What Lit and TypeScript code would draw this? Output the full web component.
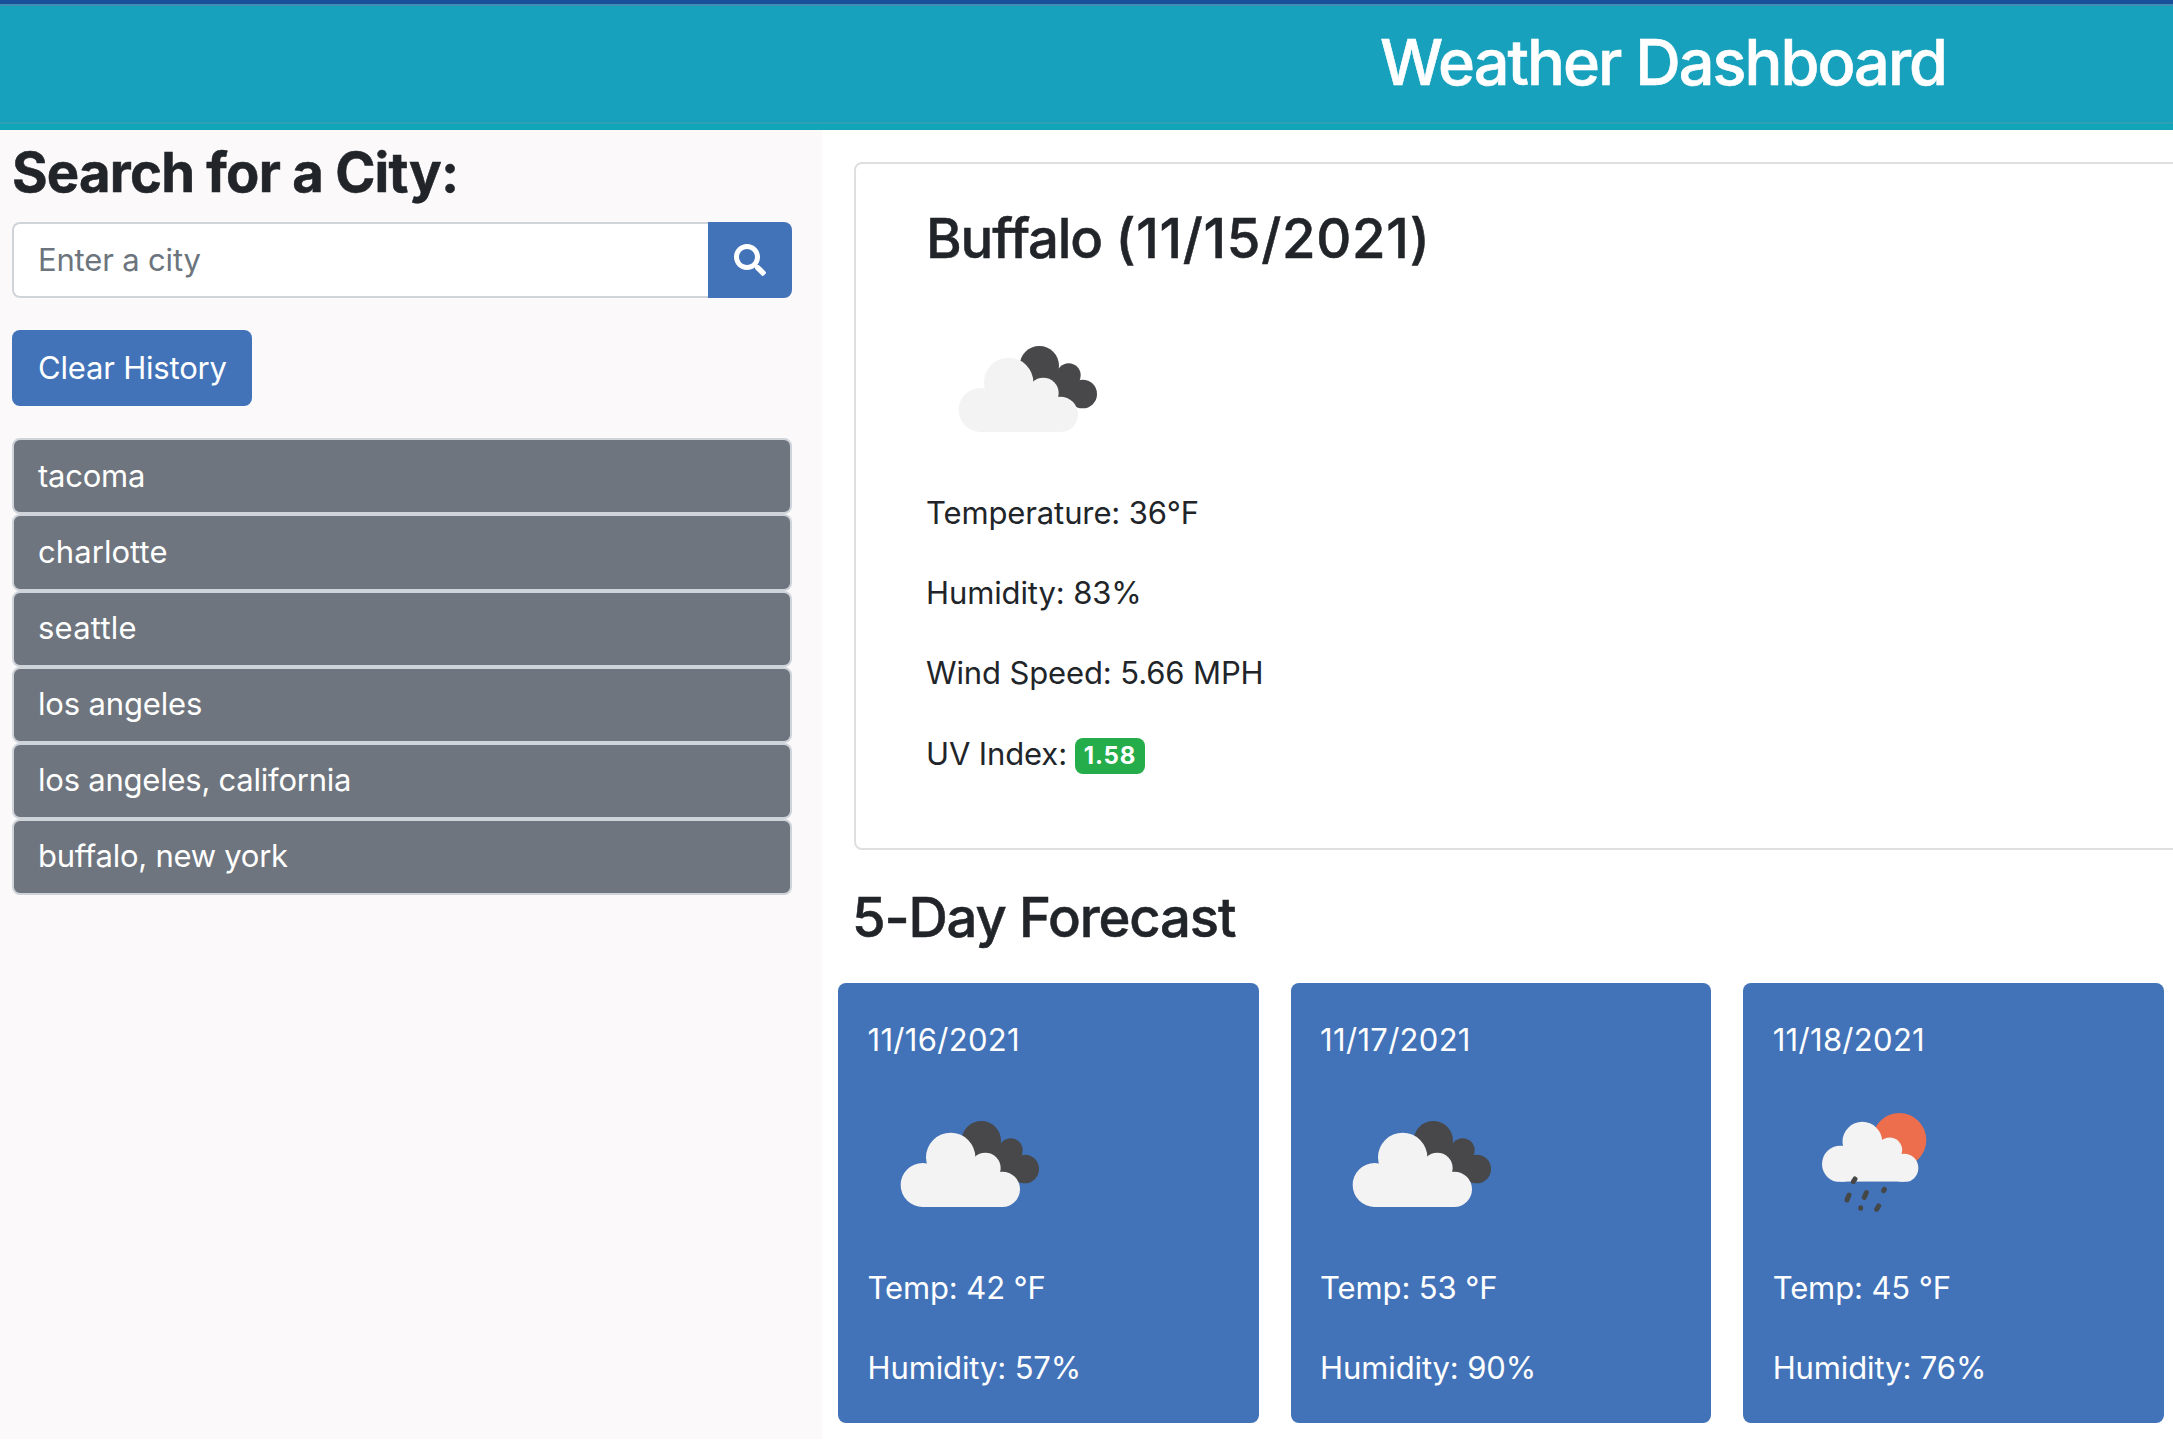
import { LitElement, html, css, svg } from "lit";
import { customElement } from "lit/decorators.js";
import { styleMap } from "lit/directives/style-map.js";

type Icon = "clouds" | "rain";

const searches = [
  { name: "tacoma", tracking: -0.23 },
  { name: "charlotte", tracking: 0.07 },
  { name: "seattle", tracking: 0.22 },
  { name: "los angeles", tracking: -0.16 },
  { name: "los angeles, california", tracking: -0.23 },
  { name: "buffalo, new york", tracking: -0.26 },
];

const forecast: { date: string; icon: Icon; temp: number; humidity: number }[] = [
  { date: "11/16/2021", icon: "clouds", temp: 42, humidity: 57 },
  { date: "11/17/2021", icon: "clouds", temp: 53, humidity: 90 },
  { date: "11/18/2021", icon: "rain", temp: 45, humidity: 76 },
];

// Each cloud sits in a nested svg whose lower edge cuts it flat.
const drawings = {
  clouds: svg`
    <g transform="translate(54 108)">
      <g fill="#48484a">
        <circle cx="286" cy="122" r="59" />
        <circle cx="374" cy="151" r="36" />
        <circle cx="416" cy="207" r="43" />
        <path d="M240 150L335 125L374 151L416 207L400 246L340 240L250 200Z" />
      </g>
      <svg width="600" height="321" fill="#f3f3f3">
        <circle cx="110" cy="255" r="66" />
        <circle cx="194" cy="172" r="74" />
        <circle cx="298" cy="204" r="46" />
        <circle cx="349" cy="268" r="53" />
        <path d="M110 200L194 172L298 204L349 230V321H110Z" />
      </svg>
    </g>`,
  rain: svg`
    <g transform="translate(84 78)">
      <circle cx="295" cy="150" r="81" fill="#ec6e4c" />
      <svg width="600" height="275" fill="#f3f3f3">
        <circle cx="118" cy="222" r="55" />
        <circle cx="184" cy="155" r="59.5" />
        <circle cx="266" cy="180" r="37.5" />
        <circle cx="309" cy="234" r="43" />
        <path d="M118 180L184 155L266 180L309 210V275H118Z" />
      </svg>
      <path fill="none" stroke="#454747" stroke-width="15" stroke-linecap="round"
        d="M162 267L157 275M144 315L138 330M196 308L190 322M250 298L248 302M179 353V355M233 348L227 358" />
    </g>`,
};

const weatherIcon = (name: Icon) =>
  html`<svg class="weather-icon" viewBox="0 0 600 600">${drawings[name]}</svg>`;

@customElement("app-root")
export class AppRoot extends LitElement {
  static styles = css`
    :host {
      display: block;
      height: 1453px;
      overflow: hidden;
      background: #fff;
      color: #212529;
      font: 400 31px/48px Inter, "Liberation Sans", sans-serif;
      letter-spacing: -0.12px;
    }
    * { box-sizing: border-box; }
    h1, h2, p, ul { margin: 0; padding: 0; }
    .top {
      height: 130px;
      padding-top: 20px;
      border-top: 4px solid #1a4f9b;
      background: linear-gradient(#3f8eb2 2px, #18a1bc 2px, #18a1bc 118px, #2f9fb6 118px, #2f9fb6 120px, #0ba6b8 120px, #15a4b8 126px);
      color: #fff;
    }
    .title {
      padding-left: 1380px;
      font-size: 63px;
      line-height: 76.8px;
      font-weight: 500;
      letter-spacing: -1.97px;
      white-space: nowrap;
      -webkit-text-stroke: 0.6px currentColor;
    }
    .page { display: flex; }
    .side { flex: none; width: 822px; height: 1309px; padding: 9px 30px 0 12px; background: #fbf9fa; }
    .heading {
      font-size: 54.4px;
      line-height: 67.2px;
      font-weight: 500;
      letter-spacing: -1.14px;
      white-space: nowrap;
      -webkit-text-stroke: 0.5px currentColor;
    }
    .search-heading { font-weight: 700; letter-spacing: -0.76px; }
    .search { display: flex; height: 76px; margin: 16px 0 32px; }
    .field {
      flex: 1;
      min-width: 0;
      padding: 0 25px 0 24px;
      border: 2px solid #ced4da;
      border-right: 0;
      border-radius: 8px 0 0 8px;
      background: #fff;
      font: inherit;
      letter-spacing: -0.17px;
      outline: none;
    }
    .field::placeholder { color: #6c757d; opacity: 1; }
    .btn { border: 0; background: #4273b9; color: #fff; font: inherit; letter-spacing: -0.19px; }
    .go { display: grid; place-items: center; width: 84px; padding: 0; border-radius: 0 8px 8px 0; }
    .go svg { width: 32px; height: 32px; }
    .clear { display: block; width: 240px; height: 76px; padding: 0 0 0 26px; border-radius: 8px; text-align: left; }
    .history { margin-top: 32px; list-style: none; }
    .history li {
      height: 76.170px;
      padding: 11.500px 24px;
      border: 2px solid #ced4da;
      border-radius: 8px;
      background: #6e757e;
      color: #fff;
    }
    .main { flex: none; width: 1351px; padding: 32px 0 0 16px; overflow: hidden; }
    .current {
      width: 1400px;
      height: 688px;
      margin-left: 16px;
      padding: 41px 0 0 70px;
      border: 2px solid #dfdfdf;
      border-radius: 8px;
    }
    .city { margin-bottom: 17px; }
    .date { letter-spacing: 0.7px; }
    .weather-icon { display: block; width: 200px; height: 200px; }
    .line { margin-bottom: 32px; white-space: nowrap; }
    .uv { display: flex; gap: 8px; padding-top: 1px; }
    .badge {
      width: 70px;
      height: 36px;
      margin-top: 8px;
      border-radius: 8px;
      background: #24ad4a;
      color: #fff;
      font-size: 24px;
      line-height: 36px;
      font-weight: 700;
      letter-spacing: 0.8px;
      text-align: center;
    }
    .forecast-title { margin: 34px 0 32px 14px; }
    .cards { display: grid; grid-template-columns: repeat(3, 420.600px); gap: 32px; }
    .card { height: 440px; padding: 33px 29.500px 0; border-radius: 8px; background: #4273b9; color: #fff; }
    .day { letter-spacing: 0.3px; }
  `;

  render() {
    return html`
      <header class="top"><h1 class="title">Weather Dashboard</h1></header>
      <div class="page">
        <aside class="side">
          <h2 class="heading search-heading">Search for a City:</h2>
          <div class="search">
            <input class="field" placeholder="Enter a city" />
            <button class="btn go" aria-label="Search">
              <svg viewBox="0 0 512 512"><path fill="#fff" d="M505 442.700L405.300 343c-4.500-4.500-10.600-7-17-7H372c27.600-35.300 44-79.700 44-128C416 93.100 322.900 0 208 0S0 93.100 0 208s93.100 208 208 208c48.300 0 92.700-16.400 128-44v16.300c0 6.400 2.500 12.500 7 17l99.700 99.700c9.400 9.400 24.600 9.400 33.900 0l28.300-28.300c9.400-9.400 9.400-24.600.1-34zM208 336c-70.700 0-128-57.200-128-128 0-70.700 57.200-128 128-128 70.700 0 128 57.200 128 128 0 70.700-57.200 128-128 128z" /></svg>
            </button>
          </div>
          <button class="btn clear">Clear History</button>
          <ul class="history">
            ${searches.map((s) => html`<li style=${styleMap({ letterSpacing: `${s.tracking}px` })}>${s.name}</li>`)}
          </ul>
        </aside>
        <main class="main">
          <section class="current">
            <h2 class="heading city">Buffalo <span class="date">(11/15/2021)</span></h2>
            ${weatherIcon("clouds")}
            <p class="line">Temperature: 36°F</p>
            <p class="line">Humidity: 83%</p>
            <p class="line">Wind Speed: 5.66 MPH</p>
            <p class="line uv">UV Index: <span class="badge">1.58</span></p>
          </section>
          <h2 class="heading forecast-title">5-Day Forecast</h2>
          <div class="cards">
            ${forecast.map((d) => html`
              <article class="card">
                <p class="day">${d.date}</p>
                ${weatherIcon(d.icon)}
                <p class="line">Temp: ${d.temp} °F</p>
                <p class="line">Humidity: ${d.humidity}%</p>
              </article>`)}
          </div>
        </main>
      </div>
    `;
  }
}
